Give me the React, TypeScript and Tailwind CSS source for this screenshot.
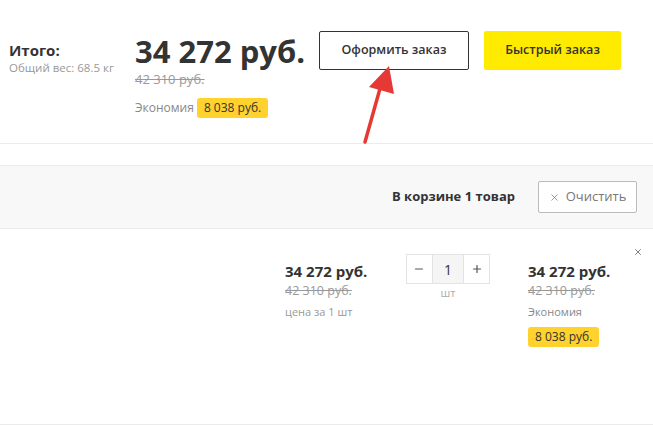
import { X, Minus, Plus } from 'lucide-react'

const font = { fontFamily: '"Open Sans", "Noto Sans", sans-serif' }

function Badge({ children }: { children: React.ReactNode }) {
  return (
    <span className="inline-block rounded-[3px] bg-[#ffd22e] px-[7px] py-[1px] text-[12px] leading-[18px] text-[#333]">
      {children}
    </span>
  )
}

export default function App() {
  return (
    <div className="relative h-[426px] w-[653px] overflow-hidden bg-white text-[#333]" style={font}>
      {/* итоговая сумма */}
      <div className="flex h-[144px] items-start border-b border-[#ececec] pt-[31px]">
        <div className="ml-[9px] mt-[9px] w-[126px]">
          <div className="text-[15px] font-bold leading-[20px]">Итого:</div>
          <div className="text-[11.5px] leading-[15px] text-[#999]">Общий вес: 68.5 кг</div>
        </div>
        <div className="mt-[5px] w-[184px]">
          <div className="text-[31px] font-bold leading-[31px]">34 272 руб.</div>
          <div className="mt-[4px] text-[13px] leading-[16px] text-[#999] line-through">42 310 руб.</div>
          <div className="mt-[11px] flex items-center gap-[3px] text-[12px] text-[#888]">
            <span>Экономия</span>
            <Badge>8 038 руб.</Badge>
          </div>
        </div>
        <button className="h-[39px] w-[150px] rounded-[2px] border border-[#333] bg-white text-[12.5px] font-semibold text-[#333]">
          Оформить заказ
        </button>
        <button className="ml-[15px] h-[39px] w-[137px] rounded-[2px] bg-[#ffeb00] text-[12.5px] font-semibold text-[#333]">
          Быстрый заказ
        </button>
      </div>

      {/* стрелка-подсказка */}
      <svg className="absolute left-0 top-0" width="653" height="150" viewBox="0 0 653 150">
        <line x1="365" y1="142" x2="381" y2="85" stroke="#e53935" strokeWidth="3.5" strokeLinecap="round" />
        <polygon points="389,66 369,87 394,94" fill="#e53935" />
      </svg>

      {/* шапка корзины */}
      <div className="mt-[21px] flex h-[64px] items-center justify-end border-y border-[#ececec] bg-[#f8f8f8] pr-[16px]">
        <span className="text-[13px] font-bold">В корзине 1 товар</span>
        <button className="ml-[23px] flex h-[32px] w-[99px] items-center justify-center gap-[6px] rounded-[2px] border border-[#bbb] bg-white text-[13px] text-[#777]">
          <X size={11} strokeWidth={1.6} />
          Очистить
        </button>
      </div>

      {/* строка товара */}
      <div className="relative flex h-[196px] items-start border-b border-[#ececec] pt-[32px]">
        <div className="ml-[285px] w-[121px]">
          <div className="text-[15px] font-bold leading-[20px]">34 272 руб.</div>
          <div className="text-[12.5px] leading-[20px] text-[#999] line-through">42 310 руб.</div>
          <div className="text-[11px] leading-[22px] text-[#999]">цена за 1 шт</div>
        </div>
        <div className="-mt-[7px] w-[122px]">
          <div className="flex h-[30px] w-[84px] border border-[#e3e3e3] text-[#555]">
            <div className="flex w-[25px] items-center justify-center">
              <Minus size={12} strokeWidth={2.4} />
            </div>
            <div className="flex w-[33px] items-center justify-center border-x border-[#e3e3e3] bg-[#f5f5f5] text-[14px] text-[#333]">
              1
            </div>
            <div className="flex w-[25px] items-center justify-center">
              <Plus size={12} strokeWidth={2.4} />
            </div>
          </div>
          <div className="w-[84px] text-center text-[11px] leading-[18px] text-[#aaa]">шт</div>
        </div>
        <div>
          <div className="text-[15px] font-bold leading-[20px]">34 272 руб.</div>
          <div className="text-[12.5px] leading-[20px] text-[#999] line-through">42 310 руб.</div>
          <div className="text-[11px] leading-[22px] text-[#888]">Экономия</div>
          <Badge>8 038 руб.</Badge>
        </div>
        <X className="absolute right-[10px] top-[18px] text-[#666]" size={10} strokeWidth={2} />
      </div>
    </div>
  )
}
